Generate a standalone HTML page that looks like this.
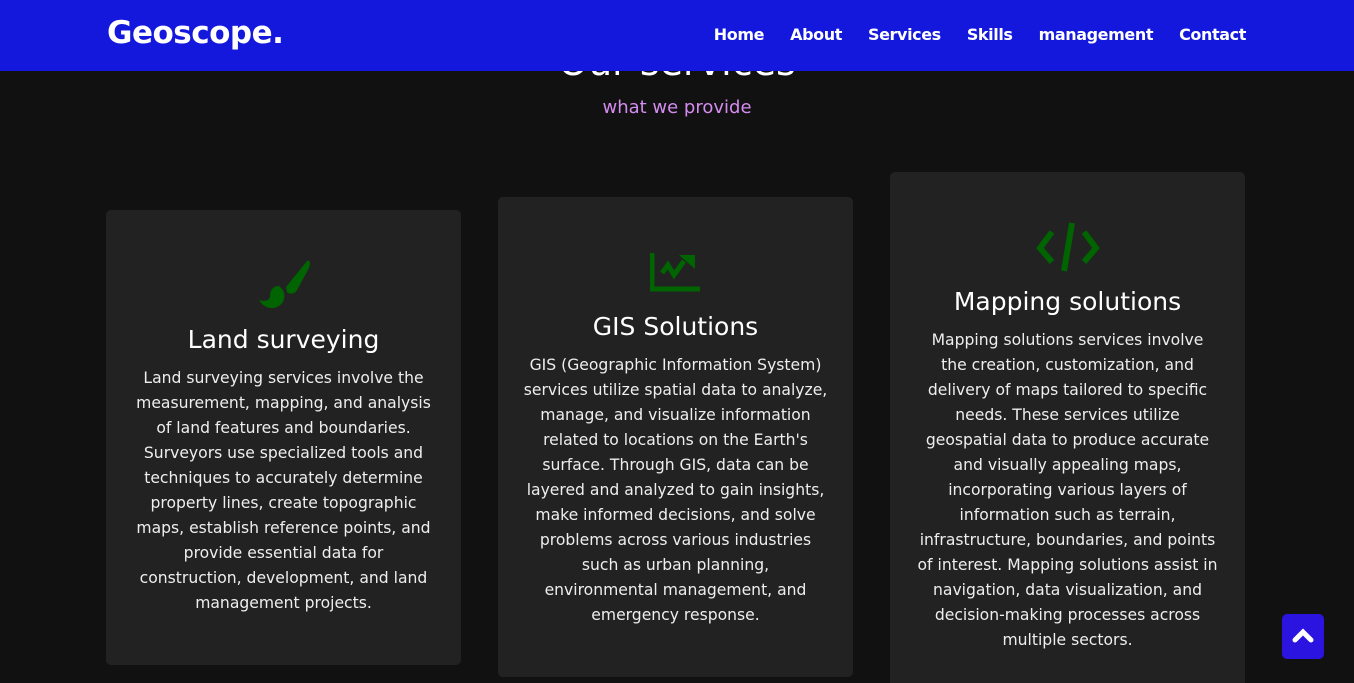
<!DOCTYPE html>
<html><head><style>
html,body{margin:0;width:1354px;height:683px;overflow:hidden}
body{background:#111;font-family:"DejaVu Sans","Liberation Sans",sans-serif;position:relative}
nav{position:absolute;top:0;left:0;right:0;height:71px;background:#1418dc;z-index:2}
.logo{position:absolute;left:107px;top:15px;color:#fff;font:bold 31px "DejaVu Sans",sans-serif;letter-spacing:-0.5px}
.links{position:absolute;right:108px;top:25px;color:#fff;font:bold 16px "DejaVu Sans",sans-serif;letter-spacing:-0.4px}
.links span{margin-left:26px}
h2{position:absolute;top:40px;left:0;right:0;text-align:center;margin:0;color:#fff;font:500 38px "DejaVu Sans",sans-serif}
.sub{position:absolute;top:97px;left:0;right:0;text-align:center;color:#d48cf0;font:18px "DejaVu Sans",sans-serif}
.card{position:absolute;width:355px;background:#222;border-radius:5px;text-align:center;color:#fff}
.card h3{margin:0;font:500 25px "DejaVu Sans",sans-serif;position:absolute;left:0;right:0}
.card p{margin:0;font-size:15.6px;line-height:25px;color:#eee;position:absolute;left:0;right:0;white-space:nowrap}
.card svg{position:absolute}
.up{position:absolute;left:1282px;top:614px;width:42px;height:45px;background:#2b13e0;border-radius:5px}
</style></head><body>
<h2>Our services</h2>
<div class="sub">what we provide</div>
<nav><div class="logo">Geoscope.</div>
<div class="links"><span>Home</span><span>About</span><span>Services</span><span>Skills</span><span>management</span><span>Contact</span></div></nav>

<div class="card" style="left:106px;top:210px;height:455px">
<svg style="left:153px;top:50px" width="52" height="50" viewBox="0 0 52 50"><path d="M48 1 C51 0 52 3 50 8 L38 30 C36 34 31 35 28 32 L27 27 Z" fill="#006400"/><path d="M20 26 C14 26 11 30 11 36 C11 40 7 42 0 40 C4 47 12 50 18 47 C25 44 27 37 24 30 Z" fill="#006400"/></svg>
<h3 style="top:115px">Land surveying</h3>
<p style="top:156px">Land surveying services involve the<br>measurement, mapping, and analysis<br>of land features and boundaries.<br>Surveyors use specialized tools and<br>techniques to accurately determine<br>property lines, create topographic<br>maps, establish reference points, and<br>provide essential data for<br>construction, development, and land<br>management projects.</p>
</div>

<div class="card" style="left:498px;top:197px;height:480px">
<svg style="left:152px;top:54px" width="52" height="42" viewBox="0 0 52 42"><path d="M2 2V38H50" stroke="#006400" stroke-width="5" fill="none"/><path d="M12 22L18 14L24 24L34 10" stroke="#006400" stroke-width="5" fill="none"/><path d="M29 4H45V18Z" fill="#006400"/></svg>
<h3 style="top:115px">GIS Solutions</h3>
<p style="top:156px">GIS (Geographic Information System)<br>services utilize spatial data to analyze,<br>manage, and visualize information<br>related to locations on the Earth's<br>surface. Through GIS, data can be<br>layered and analyzed to gain insights,<br>make informed decisions, and solve<br>problems across various industries<br>such as urban planning,<br>environmental management, and<br>emergency response.</p>
</div>

<div class="card" style="left:890px;top:172px;height:520px">
<svg style="left:146px;top:50px" width="64" height="52" viewBox="0 0 64 52"><path d="M16 10L4 26L16 40" stroke="#006400" stroke-width="6" fill="none"/><path d="M48 10L60 26L48 40" stroke="#006400" stroke-width="6" fill="none"/><path d="M36 1L28 49" stroke="#006400" stroke-width="6"/></svg>
<h3 style="top:115px">Mapping solutions</h3>
<p style="top:156px">Mapping solutions services involve<br>the creation, customization, and<br>delivery of maps tailored to specific<br>needs. These services utilize<br>geospatial data to produce accurate<br>and visually appealing maps,<br>incorporating various layers of<br>information such as terrain,<br>infrastructure, boundaries, and points<br>of interest. Mapping solutions assist in<br>navigation, data visualization, and<br>decision-making processes across<br>multiple sectors.</p>
</div>

<div class="up"><svg width="42" height="45" viewBox="0 0 42 45"><path d="M13 26L21 18L29 26" stroke="#fff" stroke-width="5" fill="none" stroke-linecap="round"/></svg></div>
</body></html>
